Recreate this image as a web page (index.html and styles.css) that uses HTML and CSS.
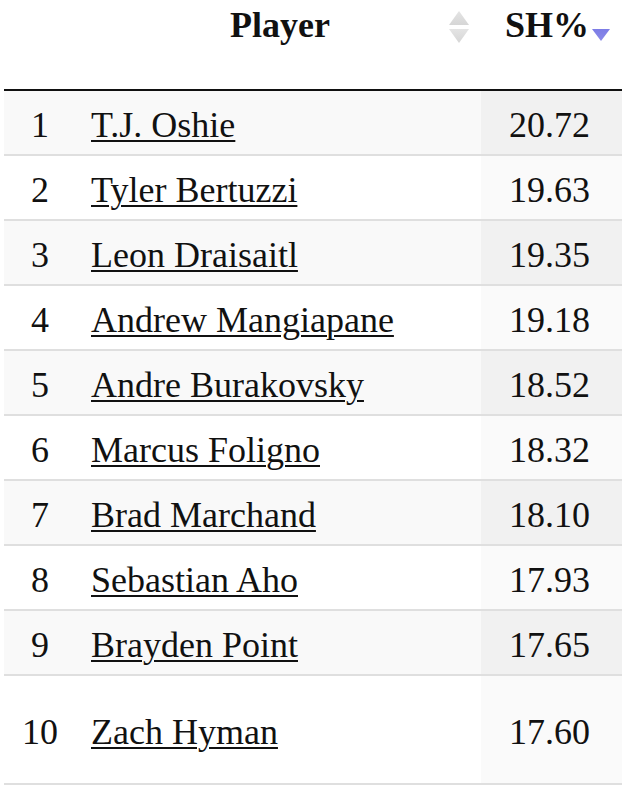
FILE: index.html
```html
<!DOCTYPE html>
<html>
<head>
<meta charset="utf-8">
<link rel="stylesheet" href="styles.css">
</head>
<body>
<table class="stats">
  <thead>
    <tr>
      <th class="col-rank"></th>
      <th class="col-player">Player<span class="sort-both"><svg width="22" height="32" viewBox="0 0 22 32"><defs><linearGradient id="g1" x1="0" y1="0" x2="0" y2="1"><stop offset="0" stop-color="#e4e4e4"/><stop offset="1" stop-color="#d6d6d6"/></linearGradient></defs><path d="M11 0 L21 14 L1 14 Z" fill="url(#g1)"/><path d="M1 18 L21 18 L11 32 Z" fill="url(#g1)"/></svg></span></th>
      <th class="col-sh">SH%<span class="sort-desc"><svg width="18" height="12" viewBox="0 0 18 12"><defs><linearGradient id="g2" x1="0" y1="0" x2="0" y2="1"><stop offset="0" stop-color="#7c7ce6"/><stop offset="1" stop-color="#8a8ae8"/></linearGradient></defs><path d="M0 0 L18 0 L9 12 Z" fill="url(#g2)"/></svg></span></th>
    </tr>
  </thead>
  <tbody>
    <tr class="odd"><td class="rank">1</td><td class="name"><a href="#">T.J. Oshie</a></td><td class="val">20.72</td></tr>
    <tr class="even"><td class="rank">2</td><td class="name"><a href="#">Tyler Bertuzzi</a></td><td class="val">19.63</td></tr>
    <tr class="odd"><td class="rank">3</td><td class="name"><a href="#">Leon Draisaitl</a></td><td class="val">19.35</td></tr>
    <tr class="even"><td class="rank">4</td><td class="name"><a href="#">Andrew Mangiapane</a></td><td class="val">19.18</td></tr>
    <tr class="odd"><td class="rank">5</td><td class="name"><a href="#">Andre Burakovsky</a></td><td class="val">18.52</td></tr>
    <tr class="even"><td class="rank">6</td><td class="name"><a href="#">Marcus Foligno</a></td><td class="val">18.32</td></tr>
    <tr class="odd"><td class="rank">7</td><td class="name"><a href="#">Brad Marchand</a></td><td class="val">18.10</td></tr>
    <tr class="even"><td class="rank">8</td><td class="name"><a href="#">Sebastian Aho</a></td><td class="val">17.93</td></tr>
    <tr class="odd"><td class="rank">9</td><td class="name"><a href="#">Brayden Point</a></td><td class="val">17.65</td></tr>
    <tr class="even last"><td class="rank">10</td><td class="name"><a href="#">Zach Hyman</a></td><td class="val">17.60</td></tr>
  </tbody>
</table>
</body>
</html>
```

FILE: styles.css
```css
html, body {
  margin: 0;
  padding: 0;
  background: #ffffff;
  overflow: hidden;
}
body {
  padding-left: 4px;
  font-family: "Liberation Serif", "Times New Roman", serif;
  font-size: 36px;
  color: #111;
}
.stats {
  width: 618px;
  border-collapse: collapse;
  border-spacing: 0;
  table-layout: fixed;
}
.stats th,
.stats td {
  box-sizing: border-box;
}
.stats th {
  font-weight: bold;
  line-height: 41px;
  padding: 5px 0 43px 0;
  border-bottom: 2px solid #111;
  vertical-align: top;
  position: relative;
  white-space: nowrap;
}
.col-rank {
  width: 72px;
}
.col-player {
  width: 405px;
  text-align: center;
}
.stats th.col-player {
  padding-left: 15px;
  padding-right: 12px;
}
.col-sh {
  width: 141px;
  text-align: right;
}
.stats th.col-sh {
  padding-right: 33px;
}
.sort-both {
  position: absolute;
  right: 11px;
  top: 11px;
  line-height: 0;
}
.sort-desc {
  position: absolute;
  right: 12px;
  top: 29px;
  line-height: 0;
}
.stats td {
  line-height: 41px;
  padding: 14px 0 8px 0;
  border-bottom: 2px solid #dfdfdf;
  white-space: nowrap;
}
.stats td.rank {
  text-align: center;
}
.stats td.name {
  padding-left: 15px;
}
.stats td.val {
  text-align: right;
  padding-right: 32px;
}
.name a {
  color: #111;
  text-decoration: underline;
  text-decoration-thickness: 2px;
  text-underline-offset: 3px;
}
tr.odd td {
  background: #f9f9f9;
}
tr.odd td.val {
  background: #f1f1f1;
}
tr.even td {
  background: #ffffff;
}
tr.even td.val {
  background: #fafafa;
}
tr.last td {
  padding-top: 36px;
  padding-bottom: 30px;
}
```
